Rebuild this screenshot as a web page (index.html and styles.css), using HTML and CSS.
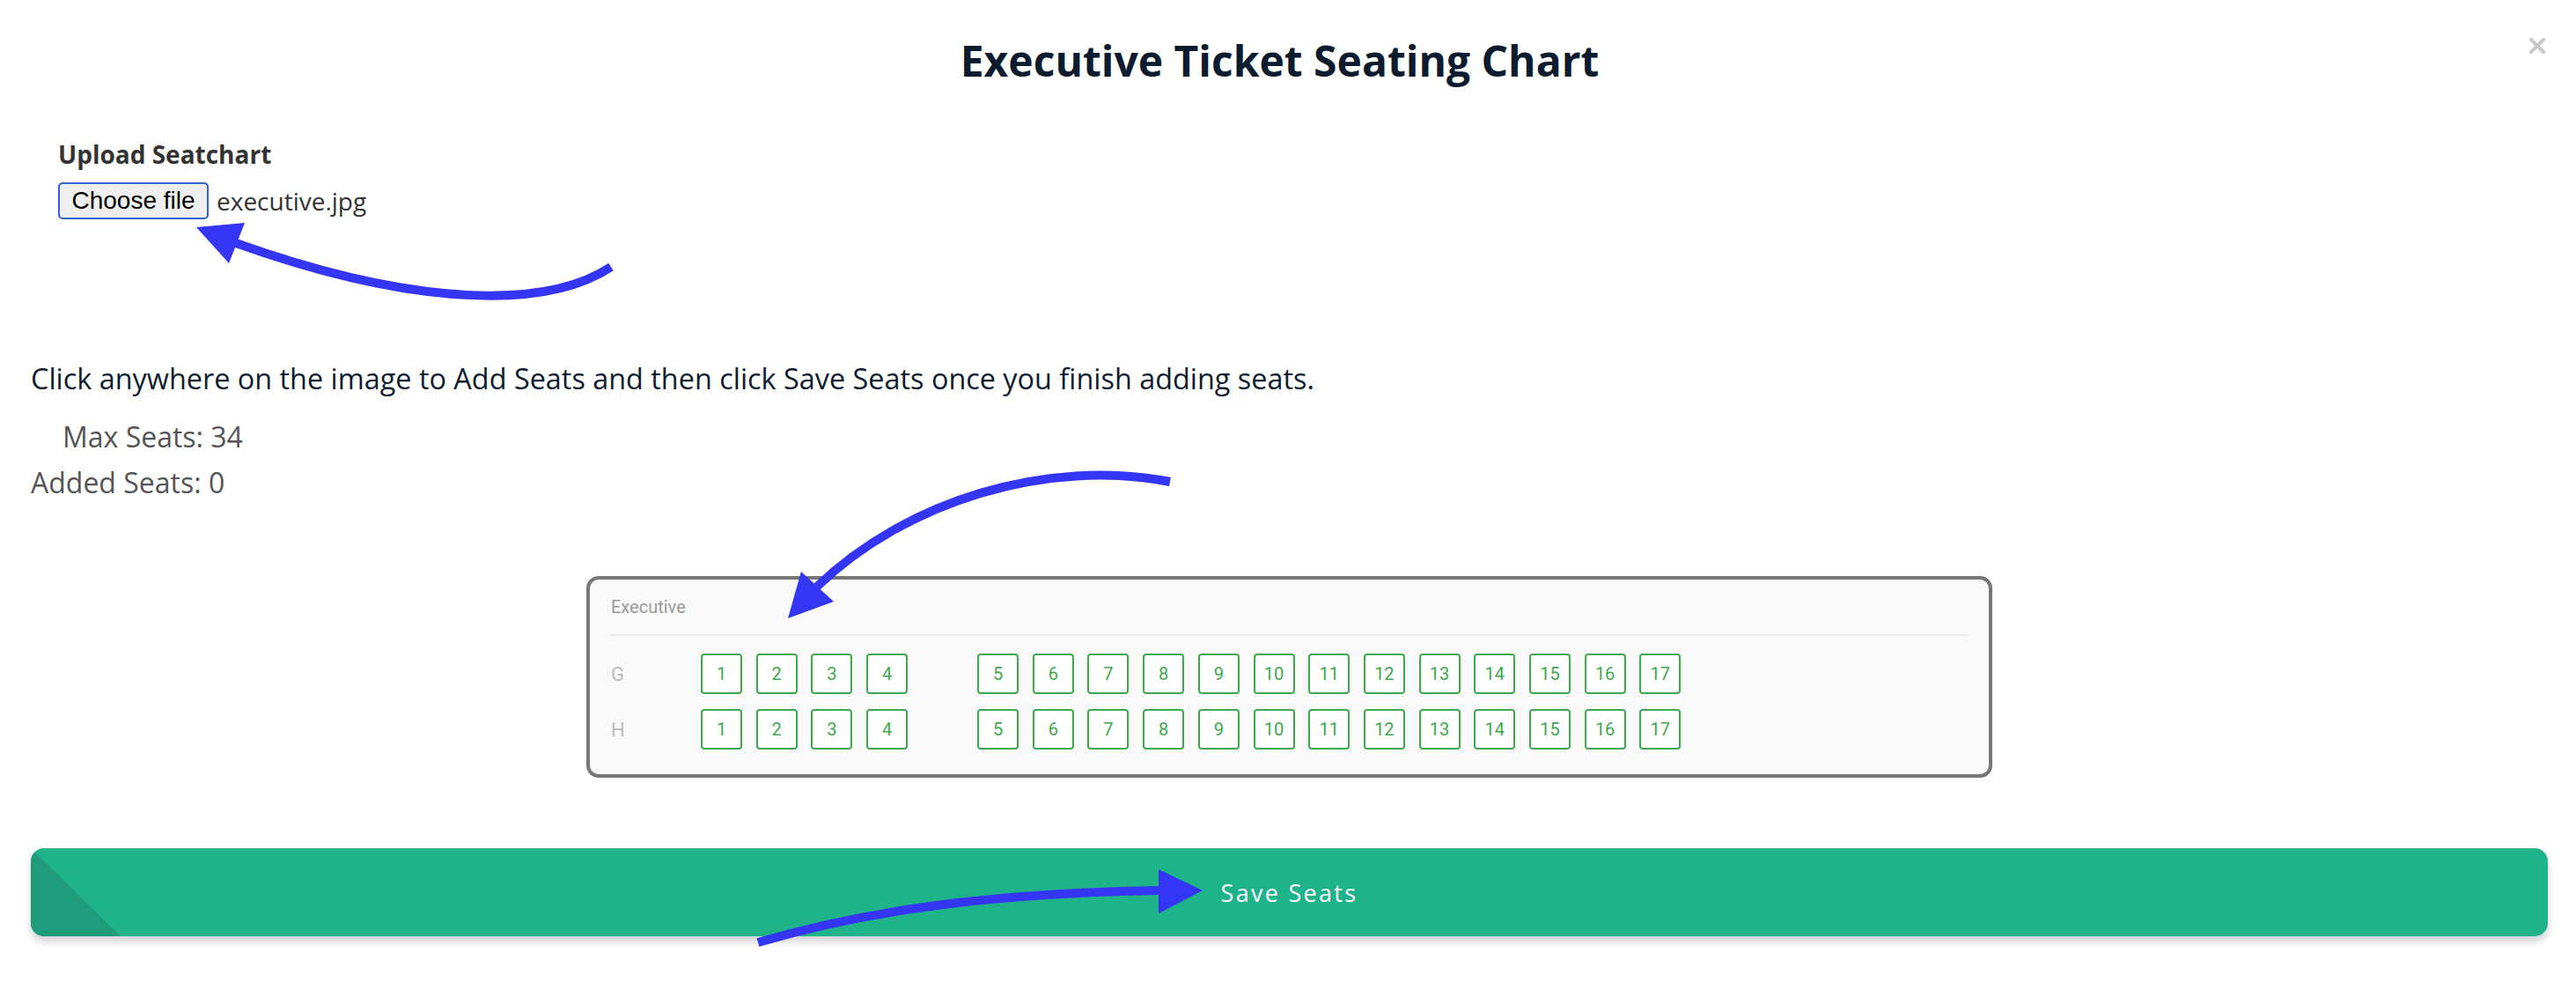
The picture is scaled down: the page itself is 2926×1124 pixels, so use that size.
FILE: index.html
```html
<!DOCTYPE html>
<html lang="en">
<head>
  <meta charset="UTF-8" />
  <title>Executive Ticket Seating Chart</title>
  <link rel="stylesheet" href="styles.css">
</head>
<body>

  <div id="seat-modal">
    <button class="modal-close" aria-label="Close">
      <svg width="18" height="18" viewBox="0 0 18 18"><path d="M2 2L16 16M16 2L2 16" stroke="#c9c9c9" stroke-width="4" stroke-linecap="square"/></svg>
    </button>

    <h1 class="modal-title">Executive Ticket Seating Chart</h1>

    <div class="upload-group">
      <label class="upload-label">Upload Seatchart</label>
      <div class="file-row">
        <span class="file-btn">Choose file</span>
        <span class="file-name">executive.jpg</span>
      </div>
    </div>

    <p class="hint">Click anywhere on the image to Add Seats and then click Save Seats once you finish adding seats.</p>

    <div class="counts">
      <div class="max-seats">Max Seats: 34</div>
      <div class="added-seats">Added Seats: 0</div>
    </div>

    <!-- Seat chart -->
    <div class="chart">
      <div class="chart-title">Executive</div>
      <div class="chart-rows">
        <div class="seat-row">
          <span class="row-label">G</span>
          <div class="seat-group">
            <span class="seat">1</span><span class="seat">2</span><span class="seat">3</span><span class="seat">4</span>
          </div>
          <div class="seat-group">
            <span class="seat">5</span><span class="seat">6</span><span class="seat">7</span><span class="seat">8</span><span class="seat">9</span><span class="seat">10</span><span class="seat">11</span><span class="seat">12</span><span class="seat">13</span><span class="seat">14</span><span class="seat">15</span><span class="seat">16</span><span class="seat">17</span>
          </div>
        </div>
        <div class="seat-row">
          <span class="row-label">H</span>
          <div class="seat-group">
            <span class="seat">1</span><span class="seat">2</span><span class="seat">3</span><span class="seat">4</span>
          </div>
          <div class="seat-group">
            <span class="seat">5</span><span class="seat">6</span><span class="seat">7</span><span class="seat">8</span><span class="seat">9</span><span class="seat">10</span><span class="seat">11</span><span class="seat">12</span><span class="seat">13</span><span class="seat">14</span><span class="seat">15</span><span class="seat">16</span><span class="seat">17</span>
          </div>
        </div>
      </div>
    </div>

    <button class="btn-save"><span>Save Seats</span></button>

    <!-- Annotation arrows -->
    <svg class="arrows" width="2926" height="1124" viewBox="0 0 2926 1124">
      <g fill="none" stroke="#3535f6" stroke-width="10">
        <path d="M694 303 C 620 352, 470 348, 268 276"/>
        <path d="M1329 547 C 1190 520, 1030 568, 928 666"/>
        <path d="M861 1070 C 980 1035, 1120 1014, 1318 1011"/>
      </g>
      <g fill="#3535f6">
        <polygon points="223,258 278,253 260,299"/>
        <polygon points="895,702 910,649 947,683"/>
        <polygon points="1366,1011 1316,987 1316,1037"/>
      </g>
    </svg>
  </div>

</body>
</html>
```

FILE: styles.css
```css
/* Reset */
* {
  margin: 0; padding: 0; box-sizing: border-box;
}

html, body {
  background: #fff;
  font-family: 'Open Sans', 'Noto Sans', sans-serif;
}

#seat-modal {
  position: relative;
  min-height: 1124px;
  padding: 0 32px 0 35px;
}

.modal-close {
  position: absolute;
  top: 43px;
  right: 35px;
  width: 18px;
  height: 18px;
  border: none;
  background: transparent;
  cursor: pointer;
}
.modal-close svg {
  display: block;
}

.modal-title {
  padding-top: 39px;
  padding-right: 22px;
  font-size: 48px;
  line-height: 60px;
  font-weight: 700;
  color: #0d1b2e;
  text-align: center;
}

/* Upload */
.upload-group {
  margin-top: 58px;
  padding-left: 31px;
}
.upload-label {
  display: block;
  font-size: 28px;
  line-height: 36px;
  font-weight: 700;
  color: #333;
}
.file-row {
  display: flex;
  align-items: center;
  gap: 9px;
  margin-top: 14px;
}
.file-btn {
  display: flex;
  align-items: center;
  justify-content: center;
  width: 171px;
  height: 42px;
  background: #efefef;
  border: 2px solid #3163d2;
  border-radius: 5px;
  font-family: 'Liberation Sans', Arial, sans-serif;
  font-size: 28px;
  color: #000;
}
.file-name {
  font-size: 28px;
  color: #333;
}

.hint {
  margin-top: 160px;
  font-size: 32.4px;
  line-height: 40px;
  color: #0f1d30;
}

.counts {
  margin-top: 21px;
  font-size: 32px;
  line-height: 52px;
  color: #555;
}
.counts .max-seats {
  padding-left: 36px;
}

/* Seat chart */
.chart {
  width: 1597px;
  margin: 80px auto 0;
  background: #f9f9f9;
  border: 4px solid #777;
  border-radius: 14px;
  padding: 0 24px 28px;
  font-family: Roboto, 'Noto Sans', sans-serif;
}
.chart-title {
  padding: 19px 0 19px;
  border-bottom: 2px solid #ebebeb;
  font-size: 20px;
  line-height: 24px;
  color: #999;
}
.chart-rows {
  display: flex;
  flex-direction: column;
  gap: 17px;
  padding-top: 20px;
}
.seat-row {
  display: flex;
  align-items: center;
}
.row-label {
  width: 102px;
  font-size: 22px;
  color: #bbb;
}
.seat-group {
  display: flex;
  gap: 15.7px;
}
.seat-group + .seat-group {
  margin-left: 79px;
}
.seat {
  display: flex;
  align-items: center;
  justify-content: center;
  width: 47px;
  height: 46px;
  border: 2px solid #3ea94f;
  border-radius: 4px;
  background: #fff;
  font-size: 20px;
  color: #3ea94f;
}

/* Save button */
.btn-save {
  position: relative;
  display: block;
  width: 100%;
  height: 100px;
  margin-top: 80px;
  border: none;
  border-radius: 15px;
  overflow: hidden;
  background: #1fb38a;
  box-shadow: 0 6px 10px rgba(0,0,0,0.18);
  color: #fff;
  font-family: 'Open Sans', 'Noto Sans', sans-serif;
  font-size: 27px;
  letter-spacing: 2.3px;
  cursor: pointer;
}
.btn-save::before {
  content: "";
  position: absolute;
  left: 0; top: 0; bottom: 0;
  width: 102px;
  background: #1d9b7b;
  clip-path: polygon(0 0, 100% 100%, 0 100%);
}
.btn-save span {
  position: relative;
}

/* Arrows over the content */
.arrows {
  position: absolute;
  top: 0; left: 0;
  pointer-events: none;
}
```
